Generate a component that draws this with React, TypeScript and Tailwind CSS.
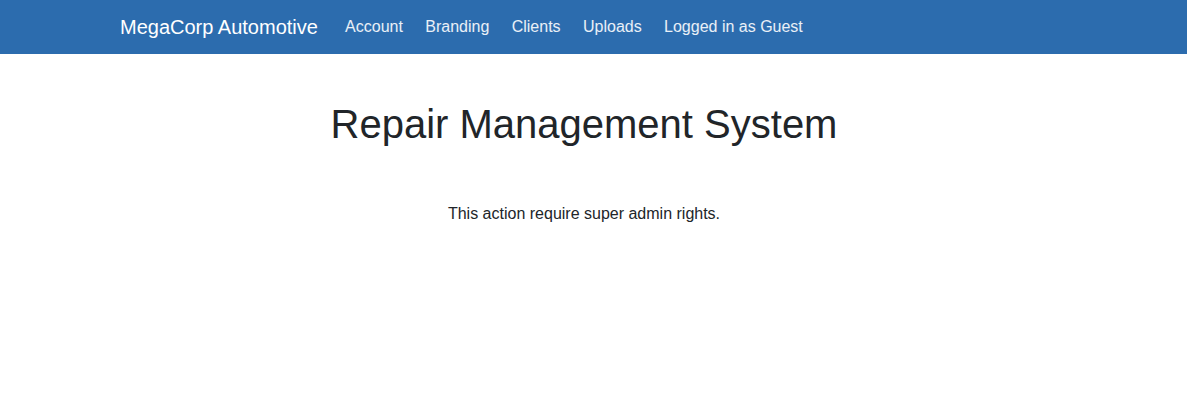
import React from "react";

const links = ["Account", "Branding", "Clients", "Uploads", "Logged in as Guest"];

const App = () => {
  return (
    <div className="min-h-[418px] bg-white font-['Liberation_Sans',Arial,sans-serif] text-[#212529]">
      <nav className="h-[54px] bg-[#2c6cae]">
        <div className="mr-[19px]">
          <div className="mx-auto flex h-[54px] w-[960px] items-center px-[16px]">
            <a className="mr-[16px] text-[20px] leading-[30px] text-white">
              MegaCorp Automotive
            </a>
            <ul className="flex items-center">
              {links.map((l) => (
                <li key={l}>
                  <a className="block px-[11.2px] text-[16px] leading-[24px] text-white/90">
                    {l}
                  </a>
                </li>
              ))}
            </ul>
          </div>
        </div>
      </nav>
      <div className="mr-[19px]">
        <div className="mx-auto w-[960px] px-[15px] text-center">
          <h1 className="mt-[46px] text-[40px] leading-[48px] font-normal">
            Repair Management System
          </h1>
          <p className="mt-[54px] text-[16px] leading-[24px]">
            This action require super admin rights.
          </p>
        </div>
      </div>
    </div>
  );
};

export default App;
